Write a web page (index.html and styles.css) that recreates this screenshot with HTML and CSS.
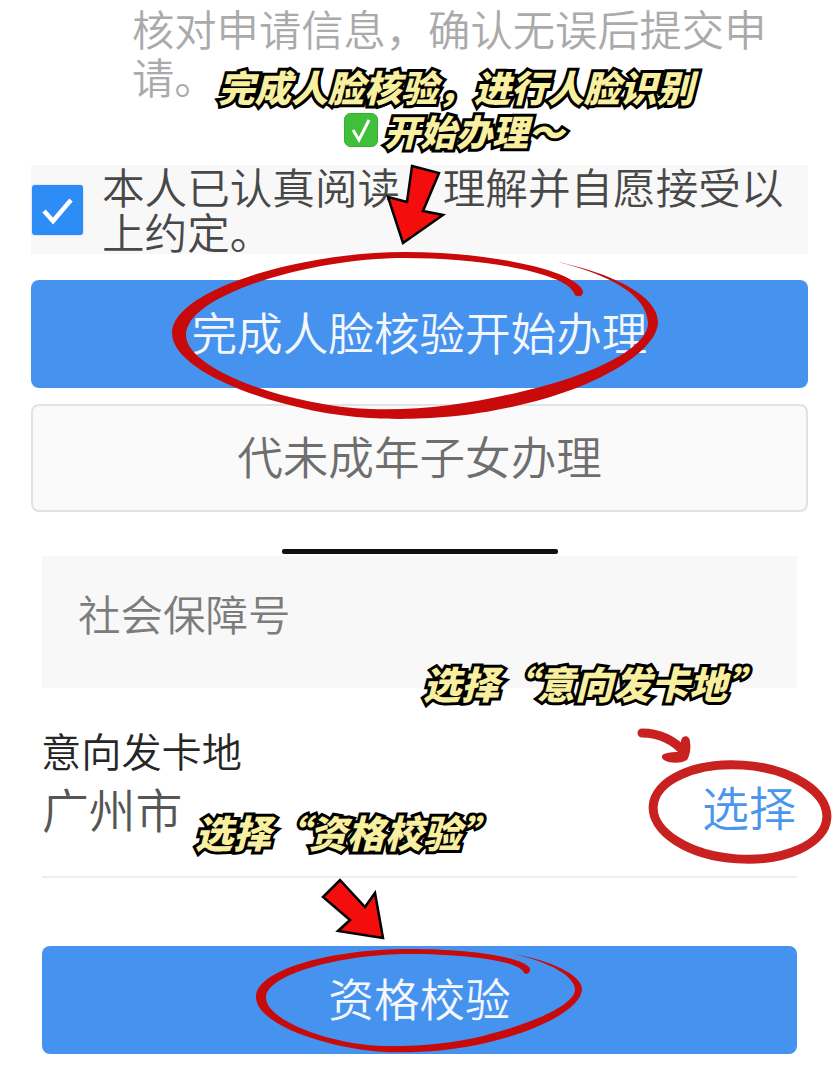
FILE: index.html
```html
<!DOCTYPE html>
<html lang="zh-CN">
<head>
<meta charset="utf-8">
<title>资格校验</title>
<link rel="stylesheet" href="styles.css">
</head>
<body>
<main class="page">
  <p class="intro">核对申请信息，确认无误后提交申请。</p>
  <section class="agree-wrap">
    <div class="agree">
      <span class="checkbox">
        <svg viewBox="0 0 50 50" width="50" height="50"><path d="M12 26 L21 36 L39 15" fill="none" stroke="#fff" stroke-width="4.5"/></svg>
      </span>
      <p class="agree-text">本人已认真阅读，理解并自愿接受以上约定。</p>
    </div>
    <button class="btn btn-primary btn-face">完成人脸核验开始办理</button>
    <button class="btn btn-plain">代未成年子女办理</button>
  </section>
  <div class="divider"></div>
  <section class="form">
    <div class="field">社会保障号</div>
    <div class="info">
      <div class="info-main">
        <div class="info-label">意向发卡地</div>
        <div class="info-value">广州市</div>
      </div>
      <a class="info-link">选择</a>
    </div>
    <button class="btn btn-primary btn-check">资格校验</button>
  </section>
</main>

<div class="note note-a">完成人脸核验，进行人脸识别</div>
<div class="note note-b"><svg class="tick" viewBox="0 0 34 34" width="34" height="34"><rect x="0.5" y="0.5" width="33" height="33" rx="6" fill="#3fbf3a" stroke="#2b9a2a"/><path d="M9 17 L15 27 L25 7" fill="none" stroke="#fff" stroke-width="3"/></svg>开始办理～</div>
<div class="note note-c">选择“意向发卡地”</div>
<div class="note note-d">选择“资格校验”</div>

<svg class="marks" viewBox="0 0 834 1079" width="834" height="1079" aria-hidden="true">
  <path class="ink" d="M558 262 C610 273 658 295 658 322 C658 350 600 387 520 405 C460 420 400 420 370 418 C290 414 172 375 172 333 C172 290 300 252 405 252 C490 252 575 270 583 291 C584 297 575 298 574 293 C565 272 480 258 405 258 C310 258 186 295 186 335 C186 370 290 406 370 409 C420 411 470 404 520 392 C600 374 650 345 648 322 C646 295 610 275 558 262 Z"/>
  <path class="ink" d="M513 954 C550 960 582 975 582 989 C582 1008 540 1030 490 1042 C450 1052 410 1053 385 1052 C330 1049 256 1025 256 997 C256 970 330 949 410 949 C460 949 520 955 530 968 C531 974 525 976 523 971 C515 960 460 954 410 954 C340 954 265 975 266 998 C266 1020 330 1045 385 1046 C430 1047 470 1040 490 1034 C540 1021 576 1003 575 989 C574 976 550 962 513 954 Z"/>
  <ellipse class="ring" cx="740" cy="812" rx="87" ry="47" transform="rotate(4 740 812)"/>
  <path class="curve" d="M642 733 C660 733 675 741 684 752"/>
  <path class="head" d="M664 754 C670 752 675 752 680 752 C681 747 680 742 682 738 C686 734 690 737 690 742 C691 748 690 755 687 760 C680 764 670 763 666 761 C661 759 661 755 664 754 Z"/>
  <polygon class="arrow" points="412,166 439,173 423,211 443,215 403,243 388,197 407,202"/>
  <polygon class="arrow" points="340,880 365,907 375,893 383,938 338,931 350,920 323,897"/>
</svg>
</body>
</html>
```
FILE: styles.css
```css
* { box-sizing: border-box; }
html, body { margin: 0; padding: 0; background: #fff; }
body {
  position: relative;
  width: 834px;
  height: 1079px;
  overflow: hidden;
  font-family: "Noto Sans CJK SC", "Noto Sans", sans-serif;
  font-weight: 350;
}
p { margin: 0; }
.page { display: flex; flex-direction: column; }

.intro {
  padding: 4px 65px 0 132px;
  font-size: 42.3px;
  line-height: 48px;
  color: #aaa;
}

.agree-wrap { display: flex; flex-direction: column; padding: 0 26px 0 31px; margin-top: 65px; }
.agree { display: flex; height: 89px; background: #f8f8f8; }
.checkbox {
  flex: none;
  width: 51px;
  height: 50px;
  margin: 20px 19px 0 1px;
  border-radius: 3px;
  background: #2d8cf5;
  box-shadow: 0 0 2px #9cc4ee;
}
.checkbox svg { display: block; }
.agree-text { width: 690px; margin-top: -2px; font-size: 42.6px; line-height: 45px; color: #484848; }

.btn {
  display: block;
  height: 108px;
  padding: 0 0 6px;
  border-radius: 8px;
  border: 0;
  font-family: inherit;
  font-weight: 350;
  font-size: 45.6px;
}
.btn-primary { background: #4693ef; color: #f4f8fe; }
.btn-face { margin-top: 26px; }
.btn-plain { margin-top: 16px; background: #fafafa; border: 2px solid #e2e2e2; color: #6e6e6e; }

.divider { width: 276px; height: 5px; margin: 37px 0 0 282px; background: #111; border-radius: 2px; }

.form { display: flex; flex-direction: column; padding: 0 37px 0 42px; margin-top: 2px; }
.field {
  height: 132px;
  padding-left: 36px;
  background: #f8f8f8;
  font-size: 42.5px;
  line-height: 114px;
  color: #7c7c7c;
}
.info {
  display: flex;
  justify-content: space-between;
  align-items: flex-end;
  height: 190px;
  padding: 40px 1px 38px 0;
  border-bottom: 2px solid #eee;
}
.info-label { margin-left: -1px; font-size: 40.2px; line-height: 48px; color: #262626; }
.info-value { margin-top: 4px; font-size: 46.8px; line-height: 60px; color: #565656; }
.info-link { font-size: 47px; line-height: 64px; color: #4a96ee; }
.btn-check { margin-top: 68px; }

.note {
  position: absolute;
  display: flex;
  align-items: center;
  white-space: nowrap;
  font-weight: 900;
  font-style: italic;
  color: #f9efa0;
  -webkit-text-stroke: 6px #000;
  paint-order: stroke fill;
  text-shadow: 2px 2px 0 #000;
}
.note-a { left: 218px; top: 61px; font-size: 36.6px; line-height: 52px; }
.note-b { left: 344px; top: 104px; font-size: 36px; line-height: 52px; }
.note-c { left: 423px; top: 656px; font-size: 38px; line-height: 54px; }
.note-d { left: 195px; top: 806px; font-size: 38px; line-height: 52px; }
.tick { margin-right: 6px; }

.marks { position: absolute; left: 0; top: 0; pointer-events: none; }
.ink { fill: #c80a0a; }
.ring { fill: none; stroke: #c92020; stroke-width: 9; }
.curve { fill: none; stroke: #c92020; stroke-width: 9; stroke-linecap: round; }
.head { fill: #c92020; }
.arrow { fill: #f40d0d; stroke: #000; stroke-width: 2.5; stroke-linejoin: miter; }
```
